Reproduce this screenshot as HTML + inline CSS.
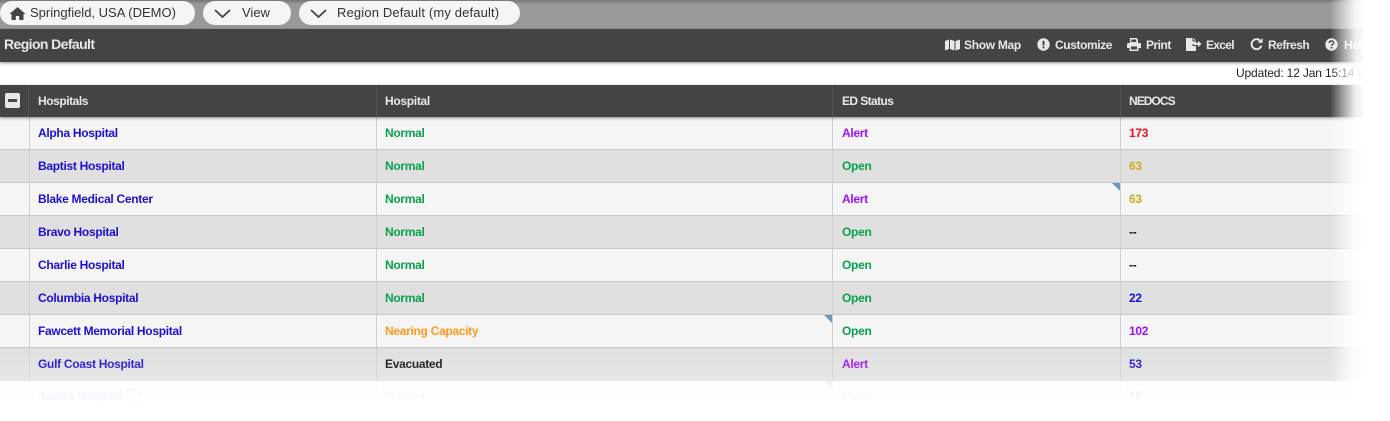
<!DOCTYPE html>
<html><head><meta charset="utf-8"><style>
html,body{margin:0;padding:0;background:#fff}
#p{position:relative;width:1390px;height:421px;overflow:hidden;background:#fff;font-family:"Liberation Sans",sans-serif;font-size:12px}
.a{position:absolute}
.t{position:absolute;white-space:nowrap;line-height:16px}
.pill{position:absolute;top:1px;height:24px;background:#f5f5f5;border-radius:12px}
.row{position:absolute;left:0;width:1390px;height:32px;border-bottom:1px solid #c8c8c8}
.c{position:absolute;white-space:nowrap;font-weight:bold;top:8px;line-height:16px;letter-spacing:-.3px}
.v{position:absolute;width:1px;top:117px;background:#cfcfcf}
.tb{position:absolute;top:37px;color:#e8e8e8;font-weight:bold;line-height:16px;white-space:nowrap;letter-spacing:-.35px}
.tri{position:absolute;width:0;height:0;border-top:8px solid #6a9ac4;border-left:8px solid transparent}
</style></head><body><div id="p">
<div class="a" style="left:0;top:0;width:1390px;height:29px;background:linear-gradient(#777 0,#999 4px,#999 100%)"></div>
<div class="pill" style="left:0;width:195px"></div>
<div class="pill" style="left:203px;width:88px"></div>
<div class="pill" style="left:299px;width:221px"></div>
<svg class="a" style="left:9px;top:6px" width="17" height="15" viewBox="0 0 17 15"><path d="M8.5 1 L0.5 8 L2.5 8 L2.5 14 L6.8 14 L6.8 10 L10.2 10 L10.2 14 L14.5 14 L14.5 8 L16.5 8 Z" fill="#444"/></svg>
<div class="t" style="left:30px;top:5px;color:#333;font-size:13px">Springfield, USA (DEMO)</div>
<svg class="a" style="left:213px;top:8px" width="19" height="11" viewBox="0 0 19 11"><path d="M2 2 L9.5 9 L17 2" fill="none" stroke="#444" stroke-width="1.8"/></svg>
<div class="t" style="left:242px;top:5px;color:#333;font-size:13px">View</div>
<svg class="a" style="left:309px;top:8px" width="19" height="11" viewBox="0 0 19 11"><path d="M2 2 L9.5 9 L17 2" fill="none" stroke="#444" stroke-width="1.8"/></svg>
<div class="t" style="left:337px;top:5px;color:#333;font-size:13px;letter-spacing:.15px">Region Default (my default)</div>

<div class="a" style="left:0;top:29px;width:1390px;height:33px;background:#444;box-shadow:0 1px 3px rgba(0,0,0,.45)"></div>
<div class="t" style="left:4px;top:36px;color:#e8e8e8;font-size:14px;font-weight:bold;letter-spacing:-.6px">Region Default</div>

<svg class="a" style="left:945px;top:39px" width="15" height="12" viewBox="0 0 15 12"><path d="M0 2 L4 .5 V10 L0 11.5 Z M5 .5 L9.5 2 V11.5 L5 10 Z M10.5 2 L15 .5 V10 L10.5 11.5 Z" fill="#e8e8e8"/></svg>
<div class="tb" style="left:964px;letter-spacing:-.3px">Show Map</div>
<svg class="a" style="left:1037px;top:38px" width="13" height="13" viewBox="0 0 13 13"><circle cx="6.5" cy="6.5" r="6.2" fill="#e8e8e8"/><rect x="5.5" y="2.8" width="2" height="4.6" fill="#444"/><rect x="5.5" y="8.4" width="2" height="2" fill="#444"/></svg>
<div class="tb" style="left:1055px;letter-spacing:-.4px">Customize</div>
<svg class="a" style="left:1127px;top:38px" width="14" height="13" viewBox="0 0 14 13"><path d="M3 0 H9.5 L11 1.5 V5 H3 Z M1.5 5 H12.5 Q14 5 14 6.5 V10 H11.5 V13 H2.5 V10 H0 V6.5 Q0 5 1.5 5 Z" fill="#e8e8e8"/><rect x="4" y="8.5" width="6" height="3" fill="#444"/><rect x="4.2" y="1.5" width="5" height="2.5" fill="#444"/></svg>
<div class="tb" style="left:1146px;letter-spacing:-.5px">Print</div>
<svg class="a" style="left:1186px;top:38px" width="16" height="13" viewBox="0 0 16 13"><path d="M0 0 H6.5 V3.5 H10 V6 H6.5 V8 H10 V13 H0 Z M7.5 0 L10 2.5 H7.5 Z M7.5 7 V4.8 L12 4.8 V2.8 L15.5 6 L12 9.2 V7 Z" fill="#e8e8e8"/></svg>
<div class="tb" style="left:1206px;letter-spacing:-.7px">Excel</div>
<svg class="a" style="left:1250px;top:38px" width="13" height="13" viewBox="0 0 13 13"><path d="M10.6 3.2 A5 5 0 1 0 11.4 7.6" fill="none" stroke="#e8e8e8" stroke-width="1.9"/><path d="M7.6 4.8 H12.6 V0 Z" fill="#e8e8e8"/></svg>
<div class="tb" style="left:1268px;letter-spacing:-.5px">Refresh</div>
<svg class="a" style="left:1325px;top:38px" width="13" height="13" viewBox="0 0 13 13"><circle cx="6.5" cy="6.5" r="6.2" fill="#e8e8e8"/><path d="M4.3 5 Q4.4 3 6.5 3 Q8.7 3 8.7 4.8 Q8.7 5.9 7.4 6.5 Q6.6 6.9 6.6 7.8" fill="none" stroke="#444" stroke-width="1.5"/><rect x="5.7" y="8.8" width="1.8" height="1.7" fill="#444"/></svg>
<div class="tb" style="left:1344px">Help</div>

<div class="t" style="left:1236px;top:65px;color:#222;letter-spacing:-.15px">Updated: 12 Jan 15:14 CST</div>

<div class="row" style="top:117px;background:#f5f5f5"><span class="c" style="left:38px;color:#1d0fd0">Alpha Hospital</span><span class="c" style="left:385px;color:#0aa050">Normal</span><span class="c" style="left:842px;color:#a010f5">Alert</span><span class="c" style="left:1129px;color:#f0101f">173</span></div>
<div class="row" style="top:150px;background:#e0e0e0"><span class="c" style="left:38px;color:#1d0fd0">Baptist Hospital</span><span class="c" style="left:385px;color:#0aa050">Normal</span><span class="c" style="left:842px;color:#0aa050">Open</span><span class="c" style="left:1129px;color:#c8b020">63</span></div>
<div class="row" style="top:183px;background:#f5f5f5"><span class="c" style="left:38px;color:#1d0fd0">Blake Medical Center</span><span class="c" style="left:385px;color:#0aa050">Normal</span><span class="c" style="left:842px;color:#a010f5">Alert</span><span class="c" style="left:1129px;color:#c8b020">63</span></div>
<div class="row" style="top:216px;background:#e0e0e0"><span class="c" style="left:38px;color:#1d0fd0">Bravo Hospital</span><span class="c" style="left:385px;color:#0aa050">Normal</span><span class="c" style="left:842px;color:#0aa050">Open</span><span class="c" style="left:1129px;color:#111">--</span></div>
<div class="row" style="top:249px;background:#f5f5f5"><span class="c" style="left:38px;color:#1d0fd0">Charlie Hospital</span><span class="c" style="left:385px;color:#0aa050">Normal</span><span class="c" style="left:842px;color:#0aa050">Open</span><span class="c" style="left:1129px;color:#111">--</span></div>
<div class="row" style="top:282px;background:#e0e0e0"><span class="c" style="left:38px;color:#1d0fd0">Columbia Hospital</span><span class="c" style="left:385px;color:#0aa050">Normal</span><span class="c" style="left:842px;color:#0aa050">Open</span><span class="c" style="left:1129px;color:#1d0fd0">22</span></div>
<div class="row" style="top:315px;background:#f5f5f5"><span class="c" style="left:38px;color:#1d0fd0">Fawcett Memorial Hospital</span><span class="c" style="left:385px;color:#ff9a1a">Nearing Capacity</span><span class="c" style="left:842px;color:#0aa050">Open</span><span class="c" style="left:1129px;color:#a010f5">102</span></div>
<div class="row" style="top:348px;background:#e0e0e0"><span class="c" style="left:38px;color:#1d0fd0">Gulf Coast Hospital</span><span class="c" style="left:385px;color:#111">Evacuated</span><span class="c" style="left:842px;color:#a010f5">Alert</span><span class="c" style="left:1129px;color:#1d0fd0">53</span></div>
<div class="row" style="top:381px;background:#f5f5f5"><span class="c" style="left:38px;top:7px;color:#1d0fd0">Juvare Hospital</span><span class="c" style="left:127px;top:7px;width:13px;height:12px;background:#f5c890;border:1px solid #e09030;border-radius:2px"></span><span class="c" style="left:385px;top:7px;color:#0aa050">Normal</span><span class="c" style="left:842px;top:7px;color:#0aa050">Open</span><span class="c" style="left:1129px;top:7px;color:#1d0fd0">15</span></div>

<div class="v" style="left:29px;height:300px"></div>
<div class="v" style="left:376px;height:300px"></div>
<div class="v" style="left:832px;height:300px"></div>
<div class="v" style="left:1120px;height:300px"></div>
<div class="tri" style="left:1112px;top:183px"></div>
<div class="tri" style="left:824px;top:315px"></div>
<div class="tri" style="left:824px;top:381px"></div>

<div class="a" style="left:0;top:85px;width:1390px;height:32px;background:#444;box-shadow:0 1px 3px rgba(0,0,0,.45)"></div>
<div class="a" style="left:5px;top:93px;width:15px;height:15px;background:#e8e8e8;border-radius:2px"></div>
<div class="a" style="left:8px;top:99px;width:9px;height:3px;background:#444"></div>
<div class="a" style="left:28px;top:85px;width:1px;height:32px;background:#555"></div>
<div class="a" style="left:376px;top:85px;width:1px;height:32px;background:#555"></div>
<div class="a" style="left:832px;top:85px;width:1px;height:32px;background:#555"></div>
<div class="a" style="left:1120px;top:85px;width:1px;height:32px;background:#555"></div>
<div class="tb" style="left:38px;top:93px;letter-spacing:-.45px">Hospitals</div>
<div class="tb" style="left:385px;top:93px;letter-spacing:-.3px">Hospital</div>
<div class="tb" style="left:842px;top:93px;letter-spacing:-.6px">ED Status</div>
<div class="tb" style="left:1129px;top:93px;letter-spacing:-.95px">NEDOCS</div>

<div class="a" style="left:0;top:350px;width:1390px;height:71px;background:linear-gradient(rgba(255,255,255,0) 0,rgba(255,255,255,.2) 30px,rgba(255,255,255,.88) 31px,rgba(255,255,255,1) 55px)"></div>
<div class="a" style="left:1330px;top:0;width:60px;height:421px;background:linear-gradient(90deg,rgba(255,255,255,0) 0,rgba(255,255,255,.5) 13px,rgba(255,255,255,.9) 25px,#fff 35px,#fff 100%)"></div>
</div></body></html>
